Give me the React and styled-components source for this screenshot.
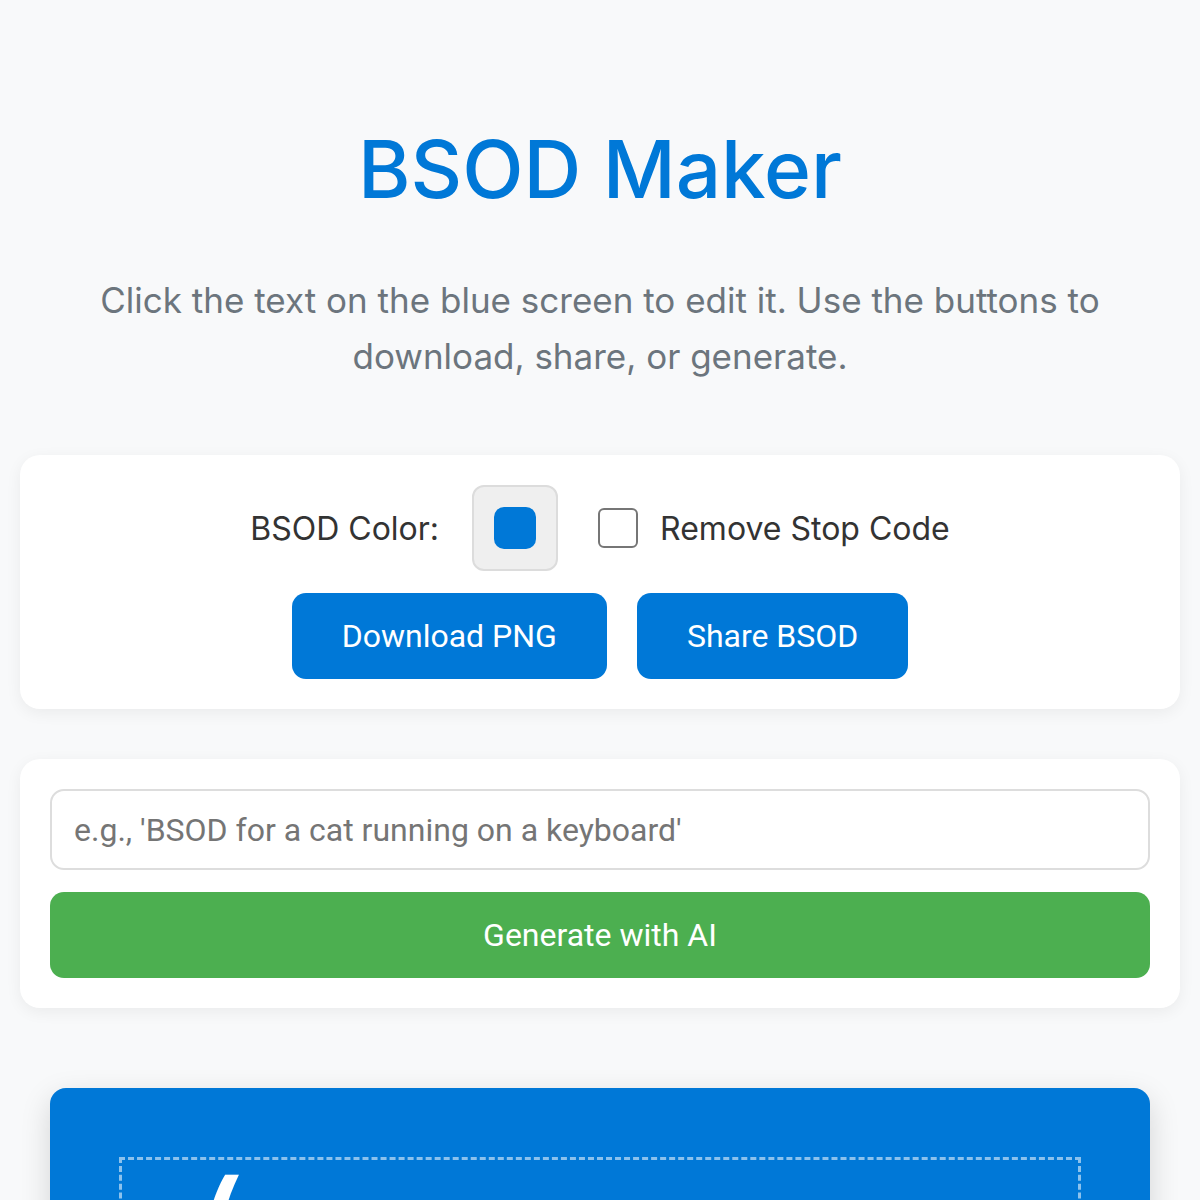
import React, { useState } from 'react';
import styled, { createGlobalStyle } from 'styled-components';

const GlobalStyle = createGlobalStyle`
  * {
    box-sizing: border-box;
  }

  body {
    margin: 0;
    background: #f8f9fa;
    font-family: Inter, "Noto Sans", sans-serif;
    color: #333;
  }
`;

function App() {
  const [prompt, setPrompt] = useState('');
  const [hideCode, setHideCode] = useState(false);

  return (
    <Page>
      <GlobalStyle />
      <Title>BSOD Maker</Title>
      <Intro>
        Click the text on the blue screen to edit it. Use the buttons to download, share, or generate.
      </Intro>

      <Card>
        <Row>
          <FieldLabel>BSOD Color:</FieldLabel>
          <ColorWell>
            <Swatch color="#0078d7" />
          </ColorWell>
          <CheckLabel>
            <CheckBox checked={hideCode} onClick={() => setHideCode(!hideCode)} />
            Remove Stop Code
          </CheckLabel>
        </Row>
        <Row>
          <Button>Download PNG</Button>
          <Button>Share BSOD</Button>
        </Row>
      </Card>

      <Card>
        <PromptInput
          value={prompt}
          onChange={(e) => setPrompt(e.target.value)}
          placeholder="e.g., 'BSOD for a cat running on a keyboard'"
        />
        <Button block green>
          Generate with AI
        </Button>
      </Card>

      <Screen>
        <Editable>
          <Face>:(</Face>
        </Editable>
      </Screen>
    </Page>
  );
}

/**
 * Styles
 * ------------
 */

const Page = styled.div`
  max-width: 1200px;
  margin: 0 auto;
  padding: 120px 20px 0;
  height: 1200px;
  overflow: hidden;
`;

const Title = styled.h1`
  margin: 0 0 55px;
  text-align: center;
  font-size: 80px;
  font-weight: 500;
  line-height: 97px;
  color: #0078d7;
`;

const Intro = styled.p`
  margin: 0 auto 71px;
  max-width: 1060px;
  text-align: center;
  font-size: 35px;
  line-height: 56px;
  color: #6c757d;
`;

const Card = styled.div`
  display: flex;
  flex-direction: column;
  gap: 22px;
  margin-bottom: 50px;
  padding: 30px;
  background: #fff;
  border-radius: 20px;
  box-shadow: 0 4px 16px rgba(0, 0, 0, 0.06);
`;

const Row = styled.div`
  display: flex;
  align-items: center;
  justify-content: center;
  gap: 30px;
`;

const FieldLabel = styled.span`
  margin-right: 3px;
  font-size: 32px;
  color: #333;
`;

const ColorWell = styled.div`
  display: flex;
  align-items: center;
  justify-content: center;
  width: 86px;
  height: 86px;
  background: #efefef;
  border: 2px solid #dcdcdc;
  border-radius: 12px;
`;

const Swatch = styled.span`
  width: 42px;
  height: 42px;
  border-radius: 10px;
  background: ${({ color }) => color};
`;

const CheckLabel = styled.label`
  display: flex;
  align-items: center;
  gap: 22px;
  margin-left: 10px;
  font-size: 32px;
  color: #333;
  cursor: pointer;
`;

const CheckBox = styled.span`
  width: 40px;
  height: 40px;
  border: 2px solid #767676;
  border-radius: 6px;
  background: ${({ checked }) => (checked ? '#0078d7' : '#fff')};
`;

const Button = styled.button`
  height: 86px;
  padding: 0 50px;
  border: none;
  border-radius: 14px;
  background: ${({ green }) => (green ? '#4caf50' : '#0078d7')};
  color: #fff;
  font-family: Roboto, sans-serif;
  font-size: 32px;
  cursor: pointer;
  width: ${({ block }) => (block ? '100%' : 'auto')};
`;

const PromptInput = styled.input`
  height: 81px;
  padding: 0 22px;
  border: 2px solid #ddd;
  border-radius: 14px;
  font-family: Roboto, sans-serif;
  font-size: 32px;
  color: #333;
  outline: none;

  &::placeholder {
    color: #757575;
  }
`;

const Screen = styled.div`
  margin: 80px 30px 0;
  padding: 69px;
  min-height: 600px;
  background: #0078d7;
  border-radius: 16px;
  box-shadow: 0 10px 30px rgba(0, 0, 0, 0.15);
`;

const Editable = styled.div`
  padding: 0 20px;
  border: 3px dashed rgba(255, 255, 255, 0.55);
  color: #fff;
`;

const Face = styled.div`
  font-size: 160px;
  font-weight: 400;
  line-height: 1;
`;

export default App;
